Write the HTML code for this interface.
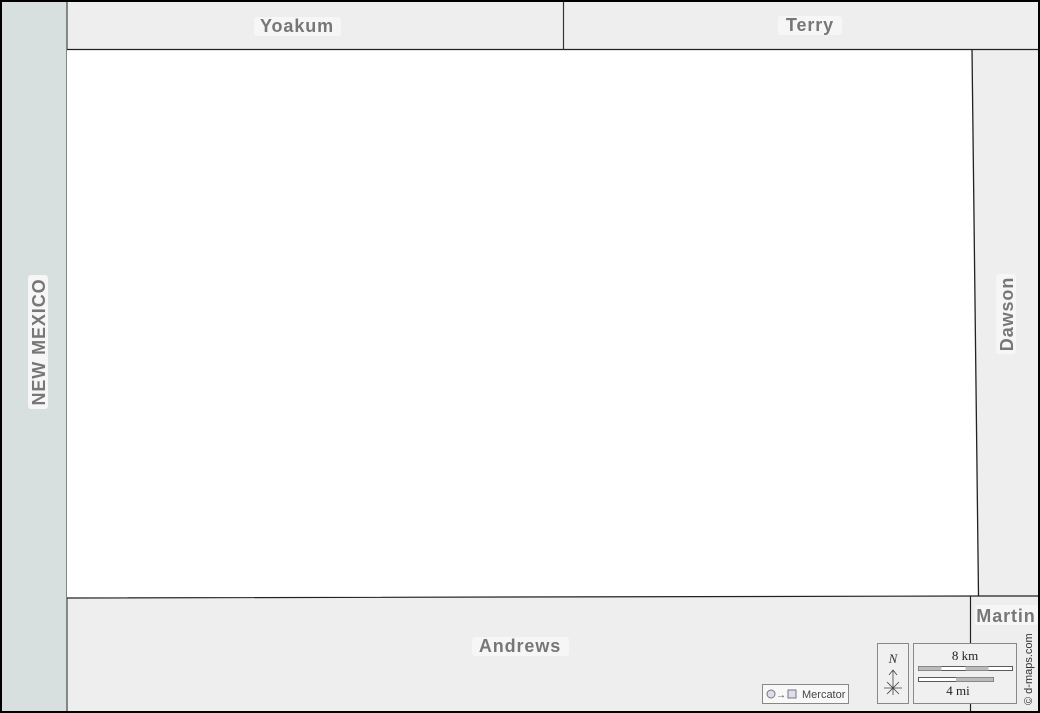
<!DOCTYPE html>
<html><head><style>
html,body{margin:0;padding:0;background:#000;}
svg{display:block;}
text{font-family:"Liberation Sans",sans-serif;}
.lb{font-weight:bold;fill:#777;font-size:18px;letter-spacing:0.9px;}
.n{font-weight:normal;}
</style></head><body>
<svg width="1040" height="713" viewBox="0 0 1040 713">
<rect x="0" y="0" width="1040" height="713" fill="#000"/>
<rect x="2" y="2" width="1036" height="709" fill="#eeeeee"/>
<rect x="2" y="2" width="65" height="709" fill="#d7e0de"/>
<line x1="67" y1="2" x2="67" y2="711" stroke="#666" stroke-width="1.5"/>
<polygon points="67,49.5 972,49.5 978.5,596 67,598" fill="#fff"/>
<polyline points="67,49.5 1038,49.5" stroke="#222" stroke-width="1.3" fill="none"/>
<line x1="563.5" y1="2" x2="563.5" y2="49.5" stroke="#333" stroke-width="1.2"/>
<polyline points="972,49.5 978.5,596" stroke="#222" stroke-width="1.3" fill="none"/>
<polyline points="67,598 978.5,596 1038,596" stroke="#222" stroke-width="1.2" fill="none"/>
<line x1="970.5" y1="596" x2="970.5" y2="711" stroke="#222" stroke-width="1.2"/>
<rect x="254" y="17" width="87" height="19" rx="3" fill="#f6f6f6"/>
<text class="lb" x="297" y="32" text-anchor="middle">Yoakum</text>
<rect x="778" y="16" width="64" height="19" rx="3" fill="#f6f6f6"/>
<text class="lb" x="810" y="31" text-anchor="middle">Terry</text>
<rect x="472" y="637" width="97" height="19" rx="3" fill="#f6f6f6"/>
<text class="lb" x="520" y="652" text-anchor="middle">Andrews</text>
<rect x="975" y="605" width="63" height="20" rx="3" fill="#f6f6f6"/>
<text class="lb" x="1006" y="622" text-anchor="middle">Martin</text>
<g transform="translate(1007,314) rotate(-90)"><rect x="-40" y="-11" width="80" height="20" rx="3" fill="#f6f6f6"/><text class="lb" x="0" y="6" text-anchor="middle">Dawson</text></g>
<g transform="translate(39,342) rotate(-90)"><rect x="-67" y="-11" width="134" height="20" rx="3" fill="#f6f6f6"/><text class="lb" x="0" y="6" text-anchor="middle">NEW MEXICO</text></g>
<rect x="762.5" y="684.5" width="86" height="19" fill="#f8f8f8" stroke="#888"/>
<circle cx="771" cy="694" r="4" fill="#dde" stroke="#777"/>
<text class="n" x="776" y="698" font-size="10" style="fill:#444">→</text>
<rect x="788" y="690" width="8" height="8" fill="#dde" stroke="#777"/>
<text class="n" x="802" y="698" font-size="11" style="fill:#444">Mercator</text>
<rect x="877.5" y="643.5" width="31" height="60" fill="#f0f0f0" stroke="#888"/>
<text class="n" x="893" y="663" font-size="13" font-style="italic" text-anchor="middle" style="font-family:'Liberation Serif',serif;fill:#333">N</text>
<path d="M893 695V670M889 675L893 670L897 675M884 688H902M887 682L899 694M899 682L887 694" stroke="#444" stroke-width="0.8" fill="none"/>
<rect x="913.5" y="643.5" width="103" height="60" fill="#f0f0f0" stroke="#888"/>
<text class="n" x="965" y="660" font-size="13" text-anchor="middle" style="font-family:'Liberation Serif',serif;fill:#222">8 km</text>
<rect x="918.5" y="666.5" width="94" height="4" fill="#fff" stroke="#333" stroke-width="0.8"/>
<rect x="918.5" y="666.5" width="23" height="4" fill="#bbb"/><rect x="965.5" y="666.5" width="23" height="4" fill="#bbb"/>
<rect x="918.5" y="677.5" width="75" height="4" fill="#fff" stroke="#333" stroke-width="0.8"/>
<rect x="956" y="677.5" width="37.5" height="4" fill="#bbb"/>
<text class="n" x="958" y="695" font-size="13" text-anchor="middle" style="font-family:'Liberation Serif',serif;fill:#222">4 mi</text>
<g transform="translate(1032,705) rotate(-90)"><text class="n" x="0" y="0" font-size="11" style="fill:#333">© d-maps.com</text></g>
</svg>
</body></html>
